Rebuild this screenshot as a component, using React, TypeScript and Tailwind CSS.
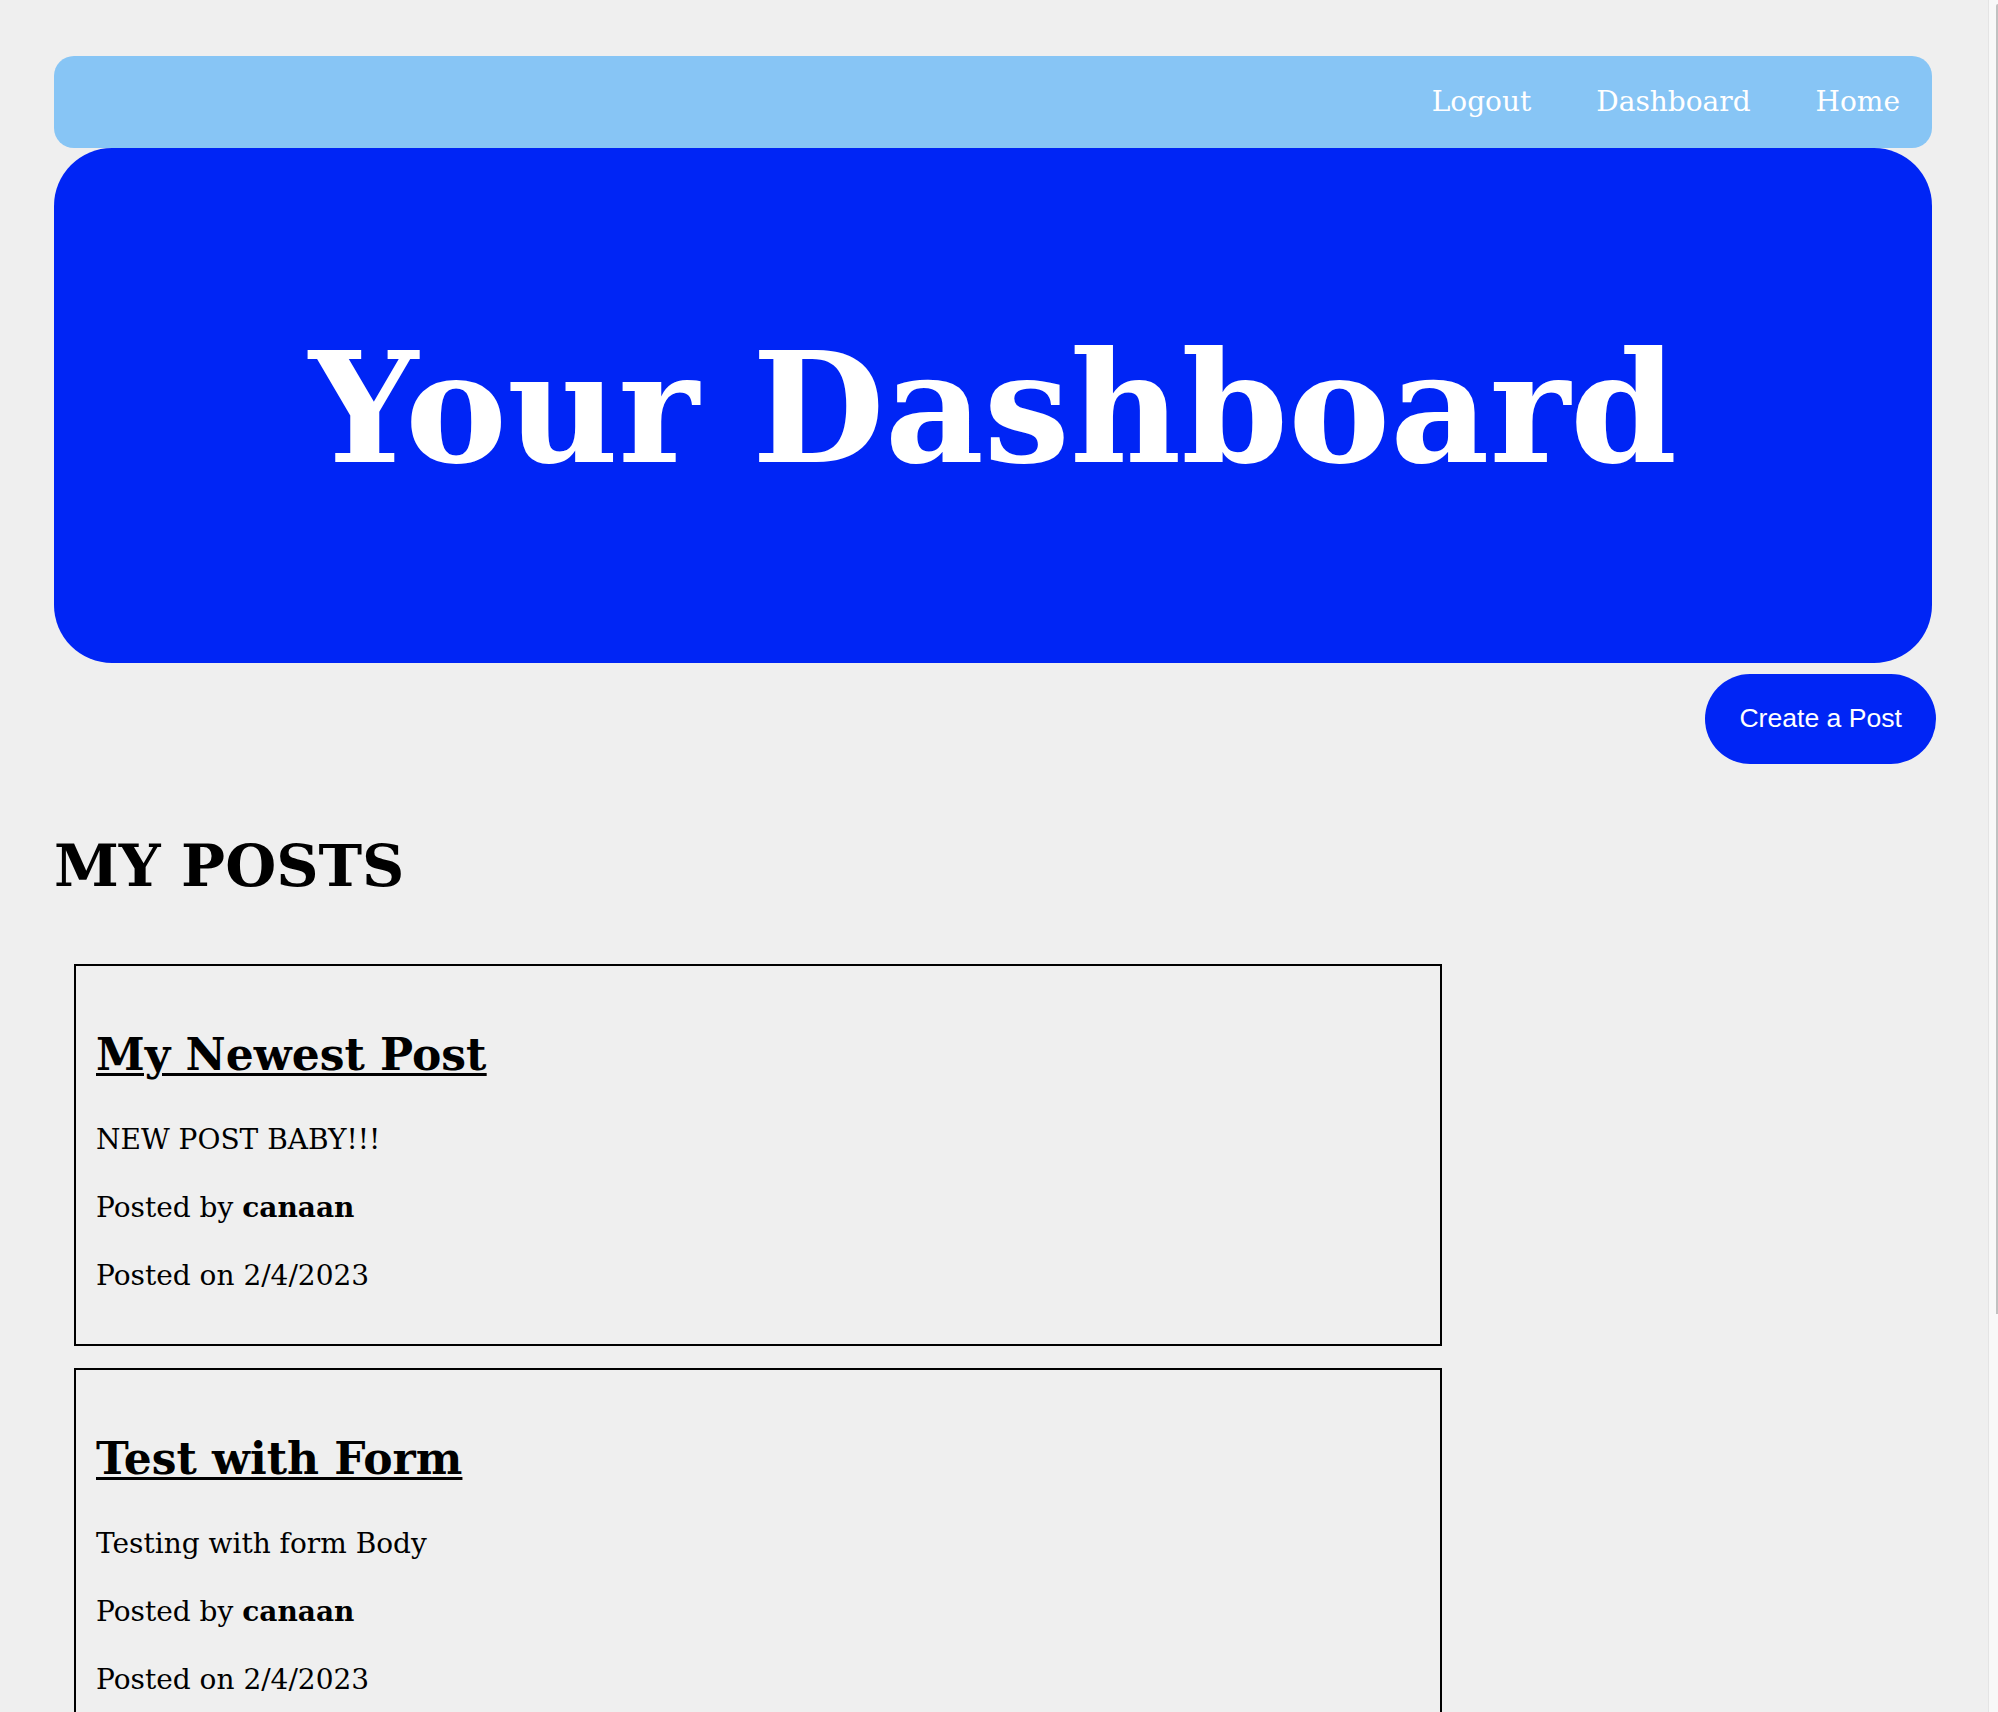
const posts = [
  { title: "My Newest Post", body: "NEW POST BABY!!!", author: "canaan", date: "2/4/2023" },
  { title: "Test with Form", body: "Testing with form Body", author: "canaan", date: "2/4/2023" },
];

function PostCard({ post }: { post: (typeof posts)[number] }) {
  return (
    <article className="w-[1368px] border-2 border-black px-[20px] pt-[20px] pb-[54px]">
      <h3 className="mt-[47px] text-[44px] font-bold leading-none underline decoration-[3px] underline-offset-[3px]">
        <a href="#">{post.title}</a>
      </h3>
      <p className="mt-[49px] text-[28px] leading-none">{post.body}</p>
      <p className="mt-[40px] text-[28px] leading-none">
        Posted by <span className="font-bold">{post.author}</span>
      </p>
      <p className="mt-[40px] text-[28px] leading-none">Posted on {post.date}</p>
    </article>
  );
}

export default function App() {
  return (
    <div className="flex h-screen overflow-hidden bg-[#efefef] text-black">
      <main className="flex-1 pl-[54px] pr-[56px] pt-[56px] font-['DejaVu_Serif',serif]">
        <nav className="flex h-[92px] items-center justify-end gap-[65px] rounded-[20px] bg-[#87c5f5] pr-[32px] text-[28px] text-white">
          <a href="#">Logout</a>
          <a href="#">Dashboard</a>
          <a href="#">Home</a>
        </nav>

        <header className="flex h-[515px] items-center justify-center rounded-[58px] bg-[#0025f5]">
          <h1 className="mt-[6px] text-[153px] font-bold leading-none text-white">Your Dashboard</h1>
        </header>

        <div className="mt-[11px] mr-[-4px] flex justify-end">
          <button className="h-[90px] rounded-full bg-[#0025f5] px-[34px] font-['Liberation_Sans',Arial,sans-serif] text-[26.6px] text-white">
            Create a Post
          </button>
        </div>

        <h2 className="mt-[73px] text-[58.6px] font-bold leading-none">MY POSTS</h2>

        <section className="mt-[68px] ml-[20px] flex flex-col gap-[22px]">
          {posts.map((p) => (
            <PostCard key={p.title} post={p} />
          ))}
        </section>
      </main>

      {/* page scrollbar */}
      <div className="w-[10px] shrink-0 border-l border-[#e4e4e4] bg-[#f8f8f8] pt-[4px]">
        <div className="ml-auto h-[1310px] w-[2px] rounded-tl-sm bg-[#c1c1c1]" />
      </div>
    </div>
  );
}
